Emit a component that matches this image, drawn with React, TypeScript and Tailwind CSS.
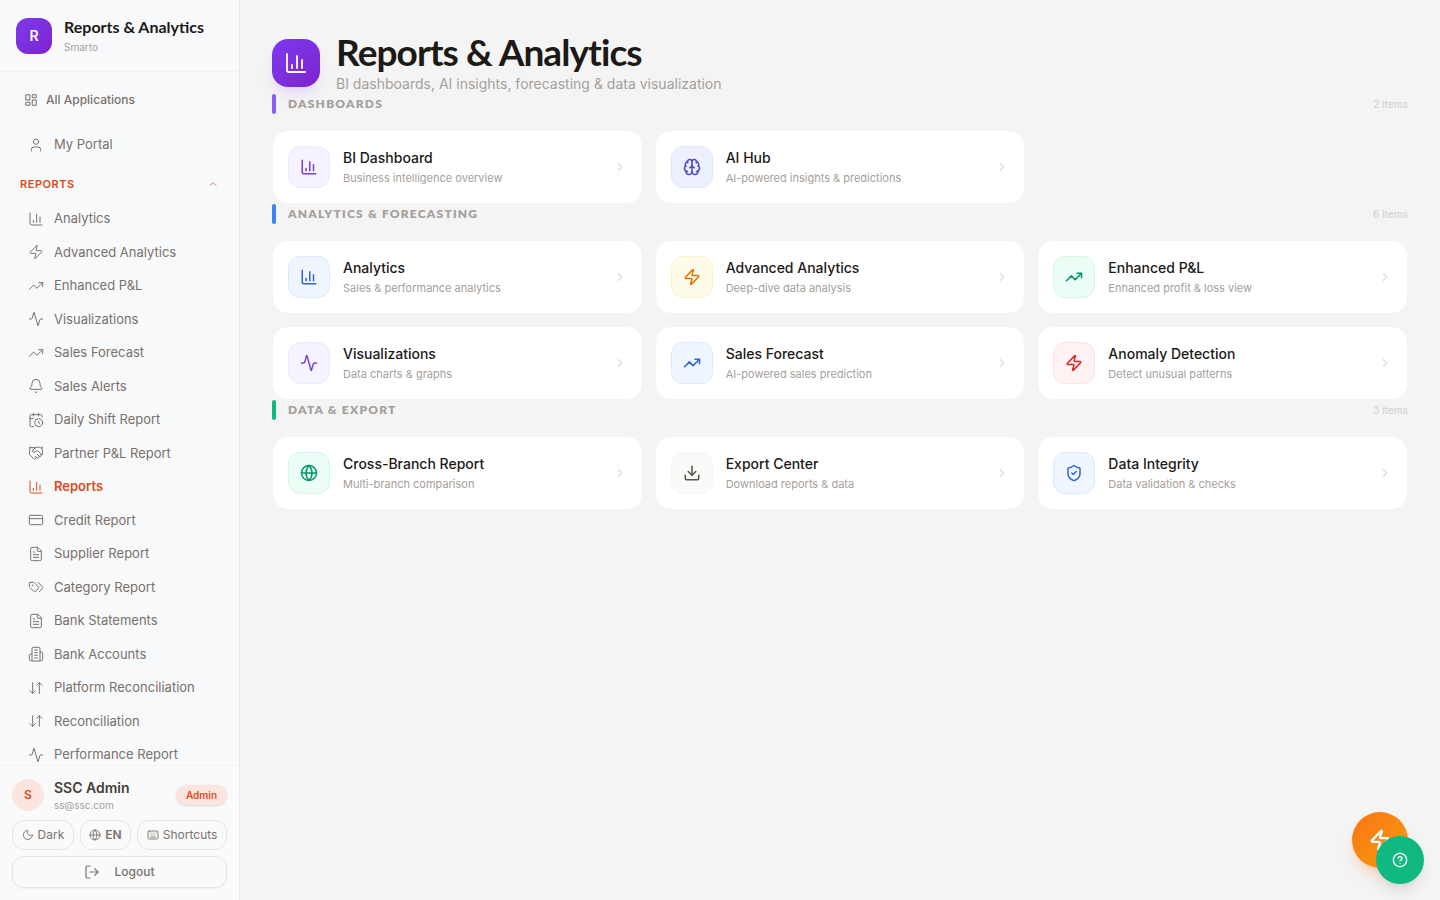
import React from "react";
import {
	Activity,
	ArrowDownUp,
	Bell,
	Brain,
	CalendarClock,
	ChartColumn,
	ChevronRight,
	ChevronUp,
	CircleHelp,
	CreditCard,
	Download,
	FileText,
	Globe,
	Handshake,
	Keyboard,
	LayoutDashboard,
	LogOut,
	Moon,
	ShieldCheck,
	TrendingUp,
	User,
	Zap,
	createLucideIcon,
	type LucideIcon,
} from "lucide-react";

const Tags = createLucideIcon("tags-flat", [
	["path", { d: "m15 5 6.3 6.3a2.4 2.4 0 0 1 0 3.4L17 19", key: "a" }],
	[
		"path",
		{
			d: "M9.586 5.586A2 2 0 0 0 8.172 5H3a1 1 0 0 0-1 1v5.172a2 2 0 0 0 .586 1.414L8.29 18.29a2.426 2.426 0 0 0 3.42 0l3.58-3.58a2.426 2.426 0 0 0 0-3.42z",
			key: "b",
		},
	],
	["circle", { cx: "6.5", cy: "9.5", r: ".5", fill: "currentColor", key: "c" }],
]);

const Building = createLucideIcon("building-wings", [
	["path", { d: "M6 22V4a2 2 0 0 1 2-2h8a2 2 0 0 1 2 2v18Z", key: "a" }],
	["path", { d: "M6 12H4a2 2 0 0 0-2 2v6a2 2 0 0 0 2 2h2", key: "b" }],
	["path", { d: "M18 9h2a2 2 0 0 1 2 2v9a2 2 0 0 1-2 2h-2", key: "c" }],
	["path", { d: "M10 6h4", key: "d" }],
	["path", { d: "M10 10h4", key: "e" }],
	["path", { d: "M10 14h4", key: "f" }],
	["path", { d: "M10 18h4", key: "g" }],
]);

const navItems: { label: string; icon: LucideIcon }[] = [
	{ label: "Analytics", icon: ChartColumn },
	{ label: "Advanced Analytics", icon: Zap },
	{ label: "Enhanced P&L", icon: TrendingUp },
	{ label: "Visualizations", icon: Activity },
	{ label: "Sales Forecast", icon: TrendingUp },
	{ label: "Sales Alerts", icon: Bell },
	{ label: "Daily Shift Report", icon: CalendarClock },
	{ label: "Partner P&L Report", icon: Handshake },
	{ label: "Reports", icon: ChartColumn },
	{ label: "Credit Report", icon: CreditCard },
	{ label: "Supplier Report", icon: FileText },
	{ label: "Category Report", icon: Tags },
	{ label: "Bank Statements", icon: FileText },
	{ label: "Bank Accounts", icon: Building },
	{ label: "Platform Reconciliation", icon: ArrowDownUp },
	{ label: "Reconciliation", icon: ArrowDownUp },
	{ label: "Performance Report", icon: Activity },
];

const tones = {
	violet: "bg-[#f5f3ff] border-[#ede9fe] text-[#7741cf]",
	indigo: "bg-[#edf1ff] border-[#e0e7ff] text-[#4f46d0]",
	blue: "bg-[#eff6ff] border-[#dbeafe] text-[#3563d4]",
	amber: "bg-[#fffbeb] border-[#fef3c7] text-[#d97706]",
	emerald: "bg-[#ecfdf5] border-[#d1fae5] text-[#059669]",
	red: "bg-[#fef2f2] border-[#fee2e2] text-[#dc2626]",
	stone: "bg-[#fafaf9] border-[#f5f5f4] text-[#57534e]",
};

type Item = {
	title: string;
	text: string;
	icon: LucideIcon;
	tone: keyof typeof tones;
};

const sections: { title: string; bar: string; items: Item[] }[] = [
	{
		title: "Dashboards",
		bar: "bg-[#8b5cf6]",
		items: [
			{ title: "BI Dashboard", text: "Business intelligence overview", icon: ChartColumn, tone: "violet" },
			{ title: "AI Hub", text: "AI-powered insights & predictions", icon: Brain, tone: "indigo" },
		],
	},
	{
		title: "Analytics & Forecasting",
		bar: "bg-[#3b82f6]",
		items: [
			{ title: "Analytics", text: "Sales & performance analytics", icon: ChartColumn, tone: "blue" },
			{ title: "Advanced Analytics", text: "Deep-dive data analysis", icon: Zap, tone: "amber" },
			{ title: "Enhanced P&L", text: "Enhanced profit & loss view", icon: TrendingUp, tone: "emerald" },
			{ title: "Visualizations", text: "Data charts & graphs", icon: Activity, tone: "violet" },
			{ title: "Sales Forecast", text: "AI-powered sales prediction", icon: TrendingUp, tone: "blue" },
			{ title: "Anomaly Detection", text: "Detect unusual patterns", icon: Zap, tone: "red" },
		],
	},
	{
		title: "Data & Export",
		bar: "bg-[#10b981]",
		items: [
			{ title: "Cross-Branch Report", text: "Multi-branch comparison", icon: Globe, tone: "emerald" },
			{ title: "Export Center", text: "Download reports & data", icon: Download, tone: "stone" },
			{ title: "Data Integrity", text: "Data validation & checks", icon: ShieldCheck, tone: "blue" },
		],
	},
];

const Sidebar: React.FC = () => {
	return (
		<aside className="sticky top-0 flex h-screen w-60 shrink-0 flex-col border-r border-[#ebebec] bg-[#f8f9fb]">
			<div className="flex h-[72px] shrink-0 items-center gap-3 border-b border-[#f1f2f3] px-4">
				<div className="flex size-9 items-center justify-center rounded-xl bg-linear-to-br from-[#7c3aed] to-[#7e22ce] text-sm font-semibold text-white">
					R
				</div>
				<div>
					<p className="font-['Lato',sans-serif] text-base leading-5 font-bold text-stone-900">
						Reports & Analytics
					</p>
					<p className="mt-0.5 text-[10px] leading-4 text-stone-400">Smarto</p>
				</div>
			</div>

			<nav className="min-h-0 flex-1 overflow-hidden px-3 pt-3">
				<a href="#apps" className="flex h-8 items-center gap-2 px-3 text-xs font-medium text-stone-500">
					<LayoutDashboard size={14} strokeWidth={1.8} />
					All Applications
				</a>
				<a href="#portal" className="mt-3 flex h-[34px] items-center gap-2.5 px-4 text-[13px] text-stone-500">
					<User size={16} strokeWidth={1.5} />
					My Portal
				</a>
				<button className="mt-1.5 flex h-8 w-full items-center justify-between px-2 text-[11px] font-semibold tracking-wider text-[#dc4a1e] uppercase">
					Reports
					<ChevronUp size={12} className="opacity-70" />
				</button>
				<ul className="mt-[3px] flex flex-col gap-0.5">
					{navItems.map(({ label, icon: Icon }) => (
						<li key={label}>
							<a
								href="#report"
								className={`flex items-center gap-2.5 px-4 py-1.5 text-[13px] leading-normal ${
									label === "Reports" ? "font-semibold text-[#dc4a1e]" : "text-stone-500"
								}`}
							>
								<Icon size={16} strokeWidth={1.5} />
								{label}
							</a>
						</li>
					))}
				</ul>
			</nav>

			<div className="shrink-0 border-t border-[#f2f3f4] bg-[#fafafa] px-3 pt-3 pb-3">
				<div className="flex items-center gap-2.5">
					<div className="flex size-8 items-center justify-center rounded-full bg-[#fae5df] text-xs font-semibold text-[#dc4a1e]">
						S
					</div>
					<div className="flex-1">
						<p className="text-sm leading-5 font-semibold text-stone-700">SSC Admin</p>
						<p className="text-[10px] leading-[14px] text-stone-400">ss@ssc.com</p>
					</div>
					<span className="rounded-full bg-[#fae5df] px-2.5 text-[10px] leading-5 font-semibold text-[#dc4a1e] shadow-sm">
						Admin
					</span>
				</div>
				<div className="mt-2 flex gap-1.5 text-xs text-stone-500">
					<button className="flex h-[30px] flex-auto items-center justify-center gap-1 rounded-xl border border-stone-200">
						<Moon size={12} strokeWidth={1.8} />
						Dark
					</button>
					<button className="flex h-[30px] flex-auto items-center justify-center gap-1 rounded-xl border border-stone-200 font-semibold">
						<Globe size={12} strokeWidth={1.8} />
						EN
					</button>
					<button className="flex h-[30px] flex-auto items-center justify-center gap-1 rounded-xl border border-stone-200">
						<Keyboard size={12} strokeWidth={1.8} />
						Shortcuts
					</button>
				</div>
				<button className="mt-1.5 flex h-8 w-full items-center justify-center gap-3.5 rounded-xl border border-stone-200 text-xs font-medium text-stone-500 shadow-xs">
					<LogOut size={16} strokeWidth={1.8} />
					Logout
				</button>
			</div>
		</aside>
	);
};

const Card: React.FC<{ item: Item }> = ({ item }) => {
	const Icon = item.icon;
	return (
		<a href="#card" className="flex items-center gap-[13px] rounded-2xl border border-[#f4f4f4] bg-white p-[15px]">
			<div className={`flex size-[42px] shrink-0 items-center justify-center rounded-xl border ${tones[item.tone]}`}>
				<Icon size={18} />
			</div>
			<div className="min-w-0 flex-1">
				<h3 className="text-sm leading-5 font-medium text-stone-900">{item.title}</h3>
				<p className="mt-0.5 text-[11px] leading-4 text-stone-400">{item.text}</p>
			</div>
			<ChevronRight size={14} className="text-[#dedcda]" />
		</a>
	);
};

const App: React.FC = () => {
	return (
		<div className="flex min-h-screen bg-[#f4f4f4] font-['Inter',sans-serif]">
			<Sidebar />
			<main className="min-w-0 flex-1 p-8">
				<header className="flex items-center gap-4">
					<div className="flex size-12 items-center justify-center rounded-2xl bg-linear-to-br from-[#7c3aed] to-[#7e22ce] text-white shadow-lg shadow-violet-500/15">
						<ChartColumn size={24} strokeWidth={1.8} />
					</div>
					<div>
						<h1 className="font-['Lato',sans-serif] text-[37px] leading-10 font-bold tracking-tight text-stone-900">
							Reports & Analytics
						</h1>
						<p className="mt-0.5 text-sm leading-5 text-stone-400">
							BI dashboards, AI insights, forecasting & data visualization
						</p>
					</div>
				</header>

				{sections.map((section) => (
					<section key={section.title}>
						<div className="mb-4 flex items-center gap-3">
							<span className={`h-5 w-1 rounded-full ${section.bar}`} />
							<h2 className="flex-1 font-['Lato',sans-serif] text-xs font-extrabold tracking-widest text-stone-400 uppercase">
								{section.title}
							</h2>
							<span className="text-[10px] font-medium text-stone-300">{section.items.length} items</span>
						</div>
						<div className="grid grid-cols-3 gap-3">
							{section.items.map((item) => (
								<Card key={item.title} item={item} />
							))}
						</div>
					</section>
				))}
			</main>

			<button
				aria-label="Quick actions"
				className="fixed right-8 bottom-8 flex size-14 items-center justify-center rounded-full bg-linear-to-br from-[#f97316] to-[#f59e0b] text-white shadow-lg shadow-orange-500/20"
			>
				<Zap size={22} strokeWidth={2.5} />
			</button>
			<button
				aria-label="Help"
				className="fixed right-4 bottom-4 flex size-12 items-center justify-center rounded-full bg-[#10b981] text-white shadow-lg"
			>
				<CircleHelp size={16} />
			</button>
		</div>
	);
};

export default App;
